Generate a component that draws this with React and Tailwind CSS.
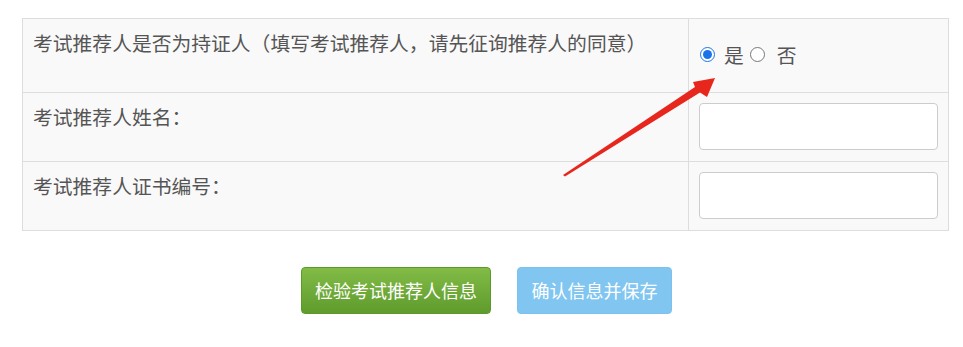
import React, { useState } from "react";

const font = { fontFamily: '"Microsoft YaHei", "Noto Sans CJK SC", "Noto Sans", sans-serif' };

function App() {
  const [holder, setHolder] = useState("yes");

  return (
    <div className="relative w-full h-[347px] bg-white pt-[18px] pl-[22px] text-[#555]" style={font}>
      <table className="w-[927px] border-collapse bg-[#f9f9f9] text-[19.8px] leading-[28px]">
        <tbody>
          <tr className="h-[74px]">
            <td className="w-[666px] border border-[#ddd] align-top pl-[10px] pt-[10px]">
              考试推荐人是否为持证人（填写考试推荐人，请先征询推荐人的同意）
            </td>
            <td className="border border-[#ddd] align-top pl-[11px] pt-[21px]">
              <label className="inline-flex items-center">
                <input
                  type="radio"
                  name="holder"
                  checked={holder === "yes"}
                  onChange={() => setHolder("yes")}
                  className="w-[15px] h-[15px] m-0 accent-[#1a73e8]"
                />
                <span className="ml-[9px]">是</span>
              </label>
              <label className="inline-flex items-center ml-[6px]">
                <input
                  type="radio"
                  name="holder"
                  checked={holder === "no"}
                  onChange={() => setHolder("no")}
                  className="w-[15px] h-[15px] m-0"
                />
                <span className="ml-[12px]">否</span>
              </label>
            </td>
          </tr>
          <tr className="h-[69px]">
            <td className="border border-[#ddd] align-top pl-[10px] pt-[10px]">考试推荐人姓名：</td>
            <td className="border border-[#ddd] align-top pl-[10px] pt-[10px]">
              <input className="block w-[239px] h-[47px] bg-white border border-[#ccc] rounded-[4px]" />
            </td>
          </tr>
          <tr className="h-[69px]">
            <td className="border border-[#ddd] align-top pl-[10px] pt-[10px]">考试推荐人证书编号：</td>
            <td className="border border-[#ddd] align-top pl-[10px] pt-[10px]">
              <input className="block w-[239px] h-[47px] bg-white border border-[#ccc] rounded-[4px]" />
            </td>
          </tr>
        </tbody>
      </table>

      <div className="flex gap-[26px] mt-[36px] ml-[279px]">
        <button className="w-[190px] h-[47px] rounded-[4px] border border-[#5b9a2a] bg-gradient-to-b from-[#82bb46] to-[#5f9c2d] text-white text-[18px]">
          检验考试推荐人信息
        </button>
        <button className="w-[155px] h-[47px] rounded-[4px] border border-[#7cc2ef] bg-[#80c6f1] text-white text-[18px]">
          确认信息并保存
        </button>
      </div>

      <svg className="absolute left-0 top-0 pointer-events-none" width="963" height="347" viewBox="0 0 963 347">
        <polygon
          points="563,175 695,87 693,82 715,78 707,97 700,92.5 565,176.5"
          fill="#e7271d"
        />
      </svg>
    </div>
  );
}

export default App;
